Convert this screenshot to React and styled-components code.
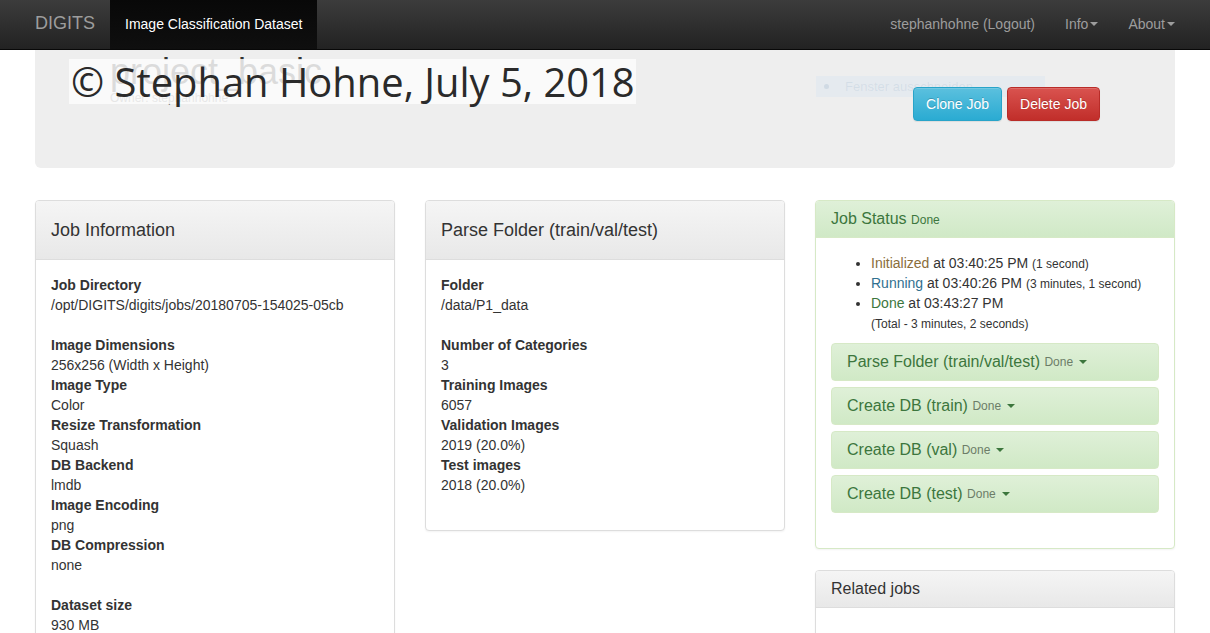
import React from 'react';
import styled, { createGlobalStyle } from 'styled-components';

const GlobalStyle = createGlobalStyle`
  html, body {
    margin: 0;
    padding: 0;
    background: #fff;
    overflow-x: hidden;
  }
  ::-webkit-scrollbar { display: none; }
  body {
    font-family: 'Liberation Sans', Arial, Helvetica, sans-serif;
    font-size: 14px;
    line-height: 20px;
    color: #333;
  }
  * { box-sizing: border-box; }
`;

const jobInfo = [
  [['Job Directory', '/opt/DIGITS/digits/jobs/20180705-154025-05cb']],
  [
    ['Image Dimensions', '256x256 (Width x Height)'],
    ['Image Type', 'Color'],
    ['Resize Transformation', 'Squash'],
    ['DB Backend', 'lmdb'],
    ['Image Encoding', 'png'],
    ['DB Compression', 'none'],
  ],
  [['Dataset size', '930 MB']],
];

const parseInfo = [
  [['Folder', '/data/P1_data']],
  [
    ['Number of Categories', '3'],
    ['Training Images', '6057'],
    ['Validation Images', '2019 (20.0%)'],
    ['Test images', '2018 (20.0%)'],
  ],
];

const tasks = [
  'Parse Folder (train/val/test)',
  'Create DB (train)',
  'Create DB (val)',
  'Create DB (test)',
];

const App = () => {
  return (
    <>
      <GlobalStyle />
      <Navbar>
        <NavInner>
          <NavLeft>
            <Brand>DIGITS</Brand>
            <NavLink active>Image Classification Dataset</NavLink>
          </NavLeft>
          <NavLeft>
            <NavLink>stephanhohne (Logout)</NavLink>
            <NavLink>Info<Caret /></NavLink>
            <NavLink>About<Caret /></NavLink>
          </NavLeft>
        </NavInner>
      </Navbar>

      <Container>
        <Jumbotron>
          <JumboLeft>
            <ProjectTitle>project_basic</ProjectTitle>
            <Owner>Owner: stephanhohne</Owner>
          </JumboLeft>
          <JumboRight>
            <Button variant="info">Clone Job</Button>
            <Button variant="danger">Delete Job</Button>
          </JumboRight>
          <GhostTip>
            <GhostDot />
            Fenster ausschneiden
          </GhostTip>
          <Watermark>© Stephan Hohne, July 5, 2018</Watermark>
        </Jumbotron>

        <Columns>
          <Column>
            <Panel>
              <PanelHeading tall>Job Information</PanelHeading>
              <PanelBody>
                {jobInfo.map((group, i) => (
                  <Dl key={i}>
                    {group.map(([k, v]) => (
                      <React.Fragment key={k}>
                        <Dt>{k}</Dt>
                        <Dd>{v}</Dd>
                      </React.Fragment>
                    ))}
                  </Dl>
                ))}
              </PanelBody>
            </Panel>
          </Column>

          <Column>
            <Panel>
              <PanelHeading tall>Parse Folder (train/val/test)</PanelHeading>
              <PanelBody>
                {parseInfo.map((group, i) => (
                  <Dl key={i}>
                    {group.map(([k, v]) => (
                      <React.Fragment key={k}>
                        <Dt>{k}</Dt>
                        <Dd>{v}</Dd>
                      </React.Fragment>
                    ))}
                  </Dl>
                ))}
              </PanelBody>
            </Panel>
          </Column>

          <Column>
            <Panel success>
              <PanelHeading success>
                Job Status <HeadSmall>Done</HeadSmall>
              </PanelHeading>
              <PanelBody>
                <StatusList>
                  <li>
                    <State color="#8a6d3b">Initialized</State> at 03:40:25 PM <Small>(1 second)</Small>
                  </li>
                  <li>
                    <State color="#31708f">Running</State> at 03:40:26 PM <Small>(3 minutes, 1 second)</Small>
                  </li>
                  <li>
                    <State color="#3c763d">Done</State> at 03:43:27 PM
                    <br />
                    <Small>(Total - 3 minutes, 2 seconds)</Small>
                  </li>
                </StatusList>
                <TaskGroup>
                  {tasks.map((t) => (
                    <TaskPanel key={t}>
                      {t} <TaskSmall>Done</TaskSmall>
                      <Caret green />
                    </TaskPanel>
                  ))}
                </TaskGroup>
              </PanelBody>
            </Panel>

            <Panel>
              <PanelHeading>Related jobs</PanelHeading>
              <PanelBody style={{ height: 60 }} />
            </Panel>
          </Column>
        </Columns>
      </Container>
    </>
  );
};

export default App;

// Styled Components
const Navbar = styled.nav`
  height: 50px;
  background-image: linear-gradient(to bottom, #3c3c3c 0%, #222 100%);
  border-bottom: 1px solid #080808;
`;

const NavInner = styled.div`
  width: 1170px;
  margin: 0 auto;
  height: 49px;
  display: flex;
  justify-content: space-between;
`;

const NavLeft = styled.div`
  display: flex;
  height: 49px;
`;

const Brand = styled.a`
  padding: 0 15px;
  font-size: 18px;
  line-height: 47px;
  color: #9d9d9d;
`;

const NavLink = styled.a`
  display: flex;
  align-items: center;
  padding: 0 15px 1px;
  height: 49px;
  font-size: 14px;
  color: ${(p) => (p.active ? '#fff' : '#9d9d9d')};
  background-image: ${(p) =>
    p.active ? 'linear-gradient(to bottom, #080808 0%, #0f0f0f 100%)' : 'none'};
`;

const Caret = styled.span`
  display: inline-block;
  width: 0;
  height: 0;
  margin-left: ${(p) => (p.green ? '6px' : '2px')};
  vertical-align: middle;
  border-top: 4px solid ${(p) => (p.green ? '#3c763d' : '#9d9d9d')};
  border-left: 4px solid transparent;
  border-right: 4px solid transparent;
`;

const Container = styled.div`
  width: 1170px;
  margin: 0 auto;
  padding: 0 15px;
`;

const Jumbotron = styled.div`
  position: relative;
  height: 118px;
  background: #eee;
  border-radius: 0 0 6px 6px;
  padding: 0 75px;
  display: flex;
  justify-content: space-between;
  margin-bottom: 32px;
`;

const JumboLeft = styled.div`
  padding-top: 3px;
`;

const ProjectTitle = styled.h1`
  margin: 0;
  font-size: 36px;
  line-height: 38px;
  font-weight: 500;
  color: #333;
`;

const Owner = styled.div`
  font-size: 12px;
  line-height: 14px;
  color: #777;
`;

const JumboRight = styled.div`
  display: flex;
  gap: 5px;
  align-items: flex-start;
  padding-top: 37px;
  position: relative;
  z-index: 2;
`;

const Button = styled.button`
  font-family: inherit;
  font-size: 14px;
  line-height: 20px;
  padding: 6px 12px;
  border-radius: 4px;
  color: #fff;
  cursor: pointer;
  text-shadow: 0 -1px 0 rgba(0, 0, 0, 0.2);
  box-shadow: inset 0 1px 0 rgba(255, 255, 255, 0.15), 0 1px 1px rgba(0, 0, 0, 0.075);
  border: 1px solid ${(p) => (p.variant === 'info' ? '#28a4c9' : '#b92c28')};
  background-image: ${(p) =>
    p.variant === 'info'
      ? 'linear-gradient(to bottom, #5bc0de 0%, #2aabd2 100%)'
      : 'linear-gradient(to bottom, #d9534f 0%, #c12e2a 100%)'};
`;

const GhostTip = styled.div`
  position: absolute;
  left: 781px;
  top: 26px;
  width: 229px;
  height: 21px;
  background: rgba(200, 225, 245, 0.22);
  display: flex;
  align-items: center;
  font-size: 13px;
  color: rgba(90, 130, 170, 0.12);
  gap: 16px;
  padding-left: 8px;
`;

const GhostDot = styled.span`
  width: 5px;
  height: 5px;
  border-radius: 50%;
  background: rgba(90, 130, 170, 0.15);
`;

const Watermark = styled.div`
  position: absolute;
  left: 34px;
  top: 9px;
  height: 45px;
  padding: 0 1px 0 2px;
  background: rgba(252, 252, 252, 0.84);
  font-family: 'Open Sans', sans-serif;
  font-size: 39.9px;
  line-height: 45px;
  color: #2a2a2a;
  white-space: nowrap;
`;

const Columns = styled.div`
  display: grid;
  grid-template-columns: repeat(3, 360px);
  gap: 30px;
  align-items: start;
`;

const Column = styled.div`
  display: flex;
  flex-direction: column;
  gap: 21px;
`;

const Panel = styled.div`
  background: #fff;
  border: 1px solid ${(p) => (p.success ? '#d6e9c6' : '#ddd')};
  border-radius: 4px;
  box-shadow: 0 1px 2px rgba(0, 0, 0, 0.05);
  overflow: hidden;
`;

const PanelHeading = styled.div`
  padding: ${(p) => (p.tall ? '19px 15px' : '8px 15px')};
  font-size: ${(p) => (p.tall ? '18px' : '16px')};
  line-height: 20px;
  color: ${(p) => (p.success ? '#3c763d' : '#333')};
  border-bottom: 1px solid ${(p) => (p.success ? '#d6e9c6' : '#ddd')};
  background-image: ${(p) =>
    p.success
      ? 'linear-gradient(to bottom, #dff0d8 0%, #d0e9c6 100%)'
      : 'linear-gradient(to bottom, #f5f5f5 0%, #e8e8e8 100%)'};
`;

const HeadSmall = styled.small`
  font-size: 12px;
  line-height: 1;
`;

const PanelBody = styled.div`
  padding: 15px;
`;

const Dl = styled.dl`
  margin: 0 0 20px;
`;

const Dt = styled.dt`
  font-weight: bold;
`;

const Dd = styled.dd`
  margin: 0;
`;

const StatusList = styled.ul`
  margin: 0 0 10px;
  padding-left: 40px;
`;

const State = styled.span`
  color: ${(p) => p.color};
`;

const Small = styled.small`
  font-size: 12px;
  line-height: 1;
`;

const TaskGroup = styled.div`
  display: flex;
  flex-direction: column;
  gap: 6px;
  margin-bottom: 20px;
`;

const TaskPanel = styled.div`
  height: 38px;
  padding: 0 15px;
  display: flex;
  align-items: center;
  font-size: 16px;
  color: #3c763d;
  border: 1px solid #d6e9c6;
  border-radius: 4px;
  background-image: linear-gradient(to bottom, #dff0d8 0%, #d0e9c6 100%);
  white-space: pre;
`;

const TaskSmall = styled.small`
  font-size: 12px;
  color: #6c7d68;
`;
